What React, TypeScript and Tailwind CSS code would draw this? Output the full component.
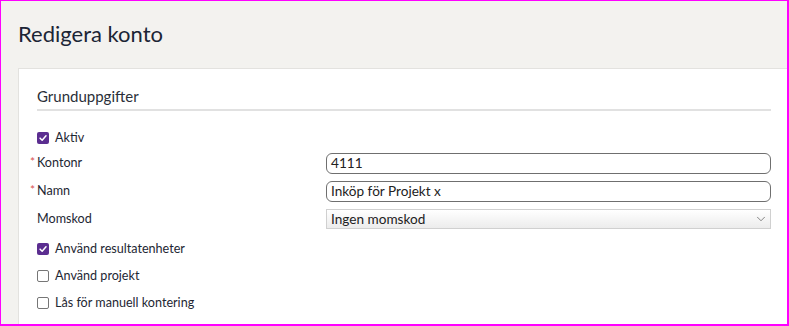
import { ChevronDown } from 'lucide-react';

const lato = { fontFamily: 'Lato, "Liberation Sans", sans-serif' };

function Checkbox({ checked }: { checked: boolean }) {
  if (checked) {
    return (
      <span className="flex h-[12px] w-[12px] items-center justify-center rounded-[2px] bg-[#5b2d90]">
        <svg viewBox="0 0 12 12" className="h-[10px] w-[10px]">
          <path d="M2.5 6.2 L5 8.6 L9.6 3.4" fill="none" stroke="#fff" strokeWidth="1.8" strokeLinecap="round" strokeLinejoin="round" />
        </svg>
      </span>
    );
  }
  return <span className="block h-[12px] w-[12px] rounded-[2px] border border-[#767676] bg-white" />;
}

function CheckRow({ label, checked, className }: { label: string; checked: boolean; className?: string }) {
  return (
    <div className={`flex h-[20px] items-center gap-[6px] ${className ?? ''}`}>
      <Checkbox checked={checked} />
      <span className="text-[12.6px] text-[#1e2733]">{label}</span>
    </div>
  );
}

function FieldRow({
  label,
  required,
  children,
  className,
}: {
  label: string;
  required?: boolean;
  children: React.ReactNode;
  className?: string;
}) {
  return (
    <div className={`flex items-center ${className ?? ''}`}>
      <div className="relative w-[289px] text-[12.6px] text-[#1e2733]">
        {required && (
          <span className="absolute -left-[7px] top-[1px] text-[12px] leading-[14px] text-[#d9534f]">*</span>
        )}
        {label}
      </div>
      {children}
    </div>
  );
}

export default function App() {
  return (
    <div
      className="h-[326px] w-[789px] overflow-hidden border-l border-t border-r-2 border-b-2 border-[#ff00ff] bg-[#f3f2ef]"
      style={lato}
    >
      <h1 className="h-[67px] pl-[17px] pt-[22px] text-[22px] leading-[22px] text-[#1b2535]">Redigera konto</h1>

      <div className="ml-[17px] h-[300px] w-[800px] border border-[#e3e2df] bg-white pl-[18px]">
        {/* Section header */}
        <div className="w-[734px]">
          <div className="pt-[18px] pb-[4px] text-[15px] leading-[18px] text-[#2a2f38]">Grunduppgifter</div>
          <div className="h-[2px] bg-[#e1e1e1]" />
        </div>

        <div className="mt-[17px] flex w-[734px] flex-col">
          <CheckRow label="Aktiv" checked />

          <FieldRow label="Kontonr" required className="mt-[5px]">
            <div className="flex h-[21px] flex-1 items-center rounded-[6px] border border-[#6f6f6f] px-[4px] text-[13.6px] text-[#222]">
              4111
            </div>
          </FieldRow>

          <FieldRow label="Namn" required className="mt-[7px]">
            <div className="flex h-[21px] flex-1 items-center rounded-[6px] border border-[#6f6f6f] px-[4px] text-[13.6px] text-[#222]">
              Inköp för Projekt x
            </div>
          </FieldRow>

          <FieldRow label="Momskod" className="mt-[7px]">
            <div className="flex h-[20px] flex-1 items-center justify-between border border-[#d0d0d0] bg-gradient-to-b from-white to-[#ececec] pl-[4px] pr-[2px] text-[13.6px] text-[#222]">
              <span>Ingen momskod</span>
              <ChevronDown className="h-[14px] w-[14px] text-[#555]" strokeWidth={1.2} />
            </div>
          </FieldRow>

          <CheckRow label="Använd resultatenheter" checked className="mt-[10px]" />
          <CheckRow label="Använd projekt" checked={false} className="mt-[7px]" />
          <CheckRow label="Lås för manuell kontering" checked={false} className="mt-[7px]" />
        </div>
      </div>
    </div>
  );
}
